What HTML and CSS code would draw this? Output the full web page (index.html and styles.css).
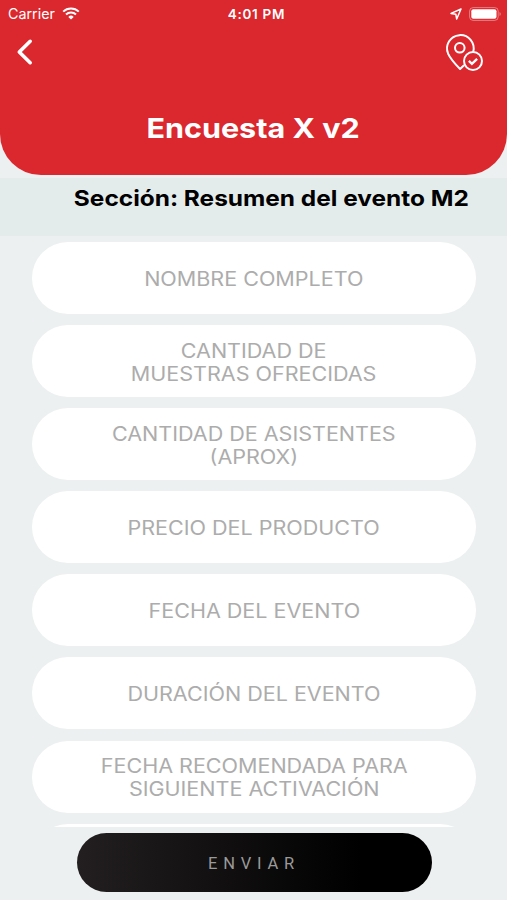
FILE: index.html
```
<!DOCTYPE html>
<html lang="es">
	<head>
		<meta charset="utf-8">
		<title>Encuesta X v2</title>
		<link rel="stylesheet" href="styles.css">
	</head>
	<body>
		<header class="header">
			<div class="status">
				<div class="status-left">
					<span class="carrier">Carrier</span>
					<svg class="wifi" width="18" height="13" viewBox="0 0 18 13">
						<path d="M1.2 4.6a11.2 11.2 0 0 1 15.6 0M4 7.5a7.2 7.2 0 0 1 10 0" fill="none" stroke="#fff" stroke-width="2"/>
						<path d="M9 12.6L6.3 9.9a3.9 3.9 0 0 1 5.4 0z" fill="#fff"/>
					</svg>
				</div>
				<span class="time">4:01 PM</span>
				<div class="status-right">
					<svg width="12" height="12" viewBox="0 0 12 12">
						<path d="M11 1L1 5.4l4.8.8L6.7 11z" fill="none" stroke="#fff" stroke-width="1.5" stroke-linejoin="round"/>
					</svg>
					<svg width="32" height="14" viewBox="0 0 32 14">
						<rect x="0.6" y="0.6" width="28.6" height="12.8" rx="3.5" fill="none" stroke="#fff" stroke-opacity="0.4"/>
						<rect x="2.3" y="2.3" width="25.2" height="9.4" rx="2" fill="#fff"/>
						<path d="M30.5 5v4q1.3-.6 1.3-2t-1.3-2z" fill="#fff" fill-opacity="0.4"/>
					</svg>
				</div>
			</div>
			<nav class="nav">
				<svg class="back" width="18" height="28" viewBox="0 0 18 28">
					<path d="M14.2 3.3L3.3 14l10.9 10.7" fill="none" stroke="#fff" stroke-width="3.6" stroke-linecap="round" stroke-linejoin="round"/>
				</svg>
				<svg class="pin" width="40" height="40" viewBox="0 0 40 40" fill="none" stroke="#fff" stroke-width="2">
					<path d="M29.2 18.9A13.3 13.3 0 1 0 4.2 20.8C6.6 26.2 11.8 31.6 16.1 36L20 32.3" stroke-linejoin="round"/>
					<circle cx="15.8" cy="14.8" r="4.8"/>
					<circle cx="29" cy="28" r="9"/>
					<path d="M24.9 27.9l3 2.9 5.2-5" stroke-width="2.4"/>
				</svg>
			</nav>
			<h1 class="title"><span>Encuesta X v2</span></h1>
		</header>
		<div class="section">
			<h2><span>Sección: Resumen del evento M2</span></h2>
		</div>
		<main class="fields">
			<div class="field"><span>NOMBRE COMPLETO</span></div>
			<div class="field"><span>CANTIDAD DE<br>MUESTRAS OFRECIDAS</span></div>
			<div class="field"><span>CANTIDAD DE ASISTENTES<br>(APROX)</span></div>
			<div class="field"><span>PRECIO DEL PRODUCTO</span></div>
			<div class="field"><span>FECHA DEL EVENTO</span></div>
			<div class="field"><span>DURACIÓN DEL EVENTO</span></div>
			<div class="field"><span>FECHA RECOMENDADA PARA<br>SIGUIENTE ACTIVACIÓN</span></div>
			<div class="field"></div>
		</main>
		<footer class="footer">
			<button class="send">ENVIAR</button>
		</footer>
	</body>
</html>
```
FILE: styles.css
```
*
{
	box-sizing: border-box;
}

body
{
	margin: 0;
	height: 900px;
	display: flex;
	flex-direction: column;
	overflow: hidden;
	background-color: #ecf0f1;
	font-family: Inter, sans-serif;
}

.header
{
	flex: none;
	height: 175px;
	background-color: #db272e;
	border-radius: 0 0 41px 41px;
	color: white;
}

.status
{
	display: grid;
	grid-template-columns: 1fr auto 1fr;
	align-items: center;
	height: 27px;
	padding: 0 6px 0 8px;
	font-size: 14px;
}

.status-left, .status-right
{
	display: flex;
	align-items: center;
	gap: 7px;
}

.status-right
{
	justify-content: flex-end;
}

.carrier
{
	font-size: 14.3px;
}

.time
{
	font-size: 13.5px;
	font-weight: 600;
	letter-spacing: 0.7px;
	padding-left: 4px;
}

.nav
{
	display: flex;
	justify-content: space-between;
	padding: 6px 23px 0 16px;
}

.back
{
	margin-top: 5px;
}

.title
{
	margin: 38px 0 0;
	text-align: center;
	font-size: 27.5px;
	line-height: 34px;
}

.title span, h2 span, .field span
{
	display: inline-block;
	transform: scaleX(1.11);
}

.section
{
	flex: none;
	height: 58px;
	margin-top: 3px;
	padding-right: 38px;
	background-color: #e4eceb;
}

h2
{
	margin: 0;
	text-align: right;
	font-size: 22px;
	line-height: 40px;
	white-space: nowrap;
}

h2 span
{
	transform-origin: right;
}

.fields
{
	flex: none;
	height: 591px;
	overflow: hidden;
	padding: 6px 31px 0 32px;
}

.field
{
	display: flex;
	align-items: center;
	justify-content: center;
	height: 72px;
	margin-bottom: 11.1px;
	border-radius: 36px;
	background-color: white;
	color: #acacac;
	text-align: center;
	font-size: 19.4px;
	line-height: 23px;
	padding-top: 3px;
}

.footer
{
	display: flex;
	justify-content: center;
	padding: 6px 0 0 1px;
}

.send
{
	width: 355px;
	height: 59px;
	border: 0;
	border-radius: 30px;
	background: linear-gradient(to right, #231f20, #000 80%);
	color: #9a9a9a;
	font-family: Roboto, sans-serif;
	font-size: 16.5px;
	letter-spacing: 5.8px;
	padding: 1px 0 0;
}
```
